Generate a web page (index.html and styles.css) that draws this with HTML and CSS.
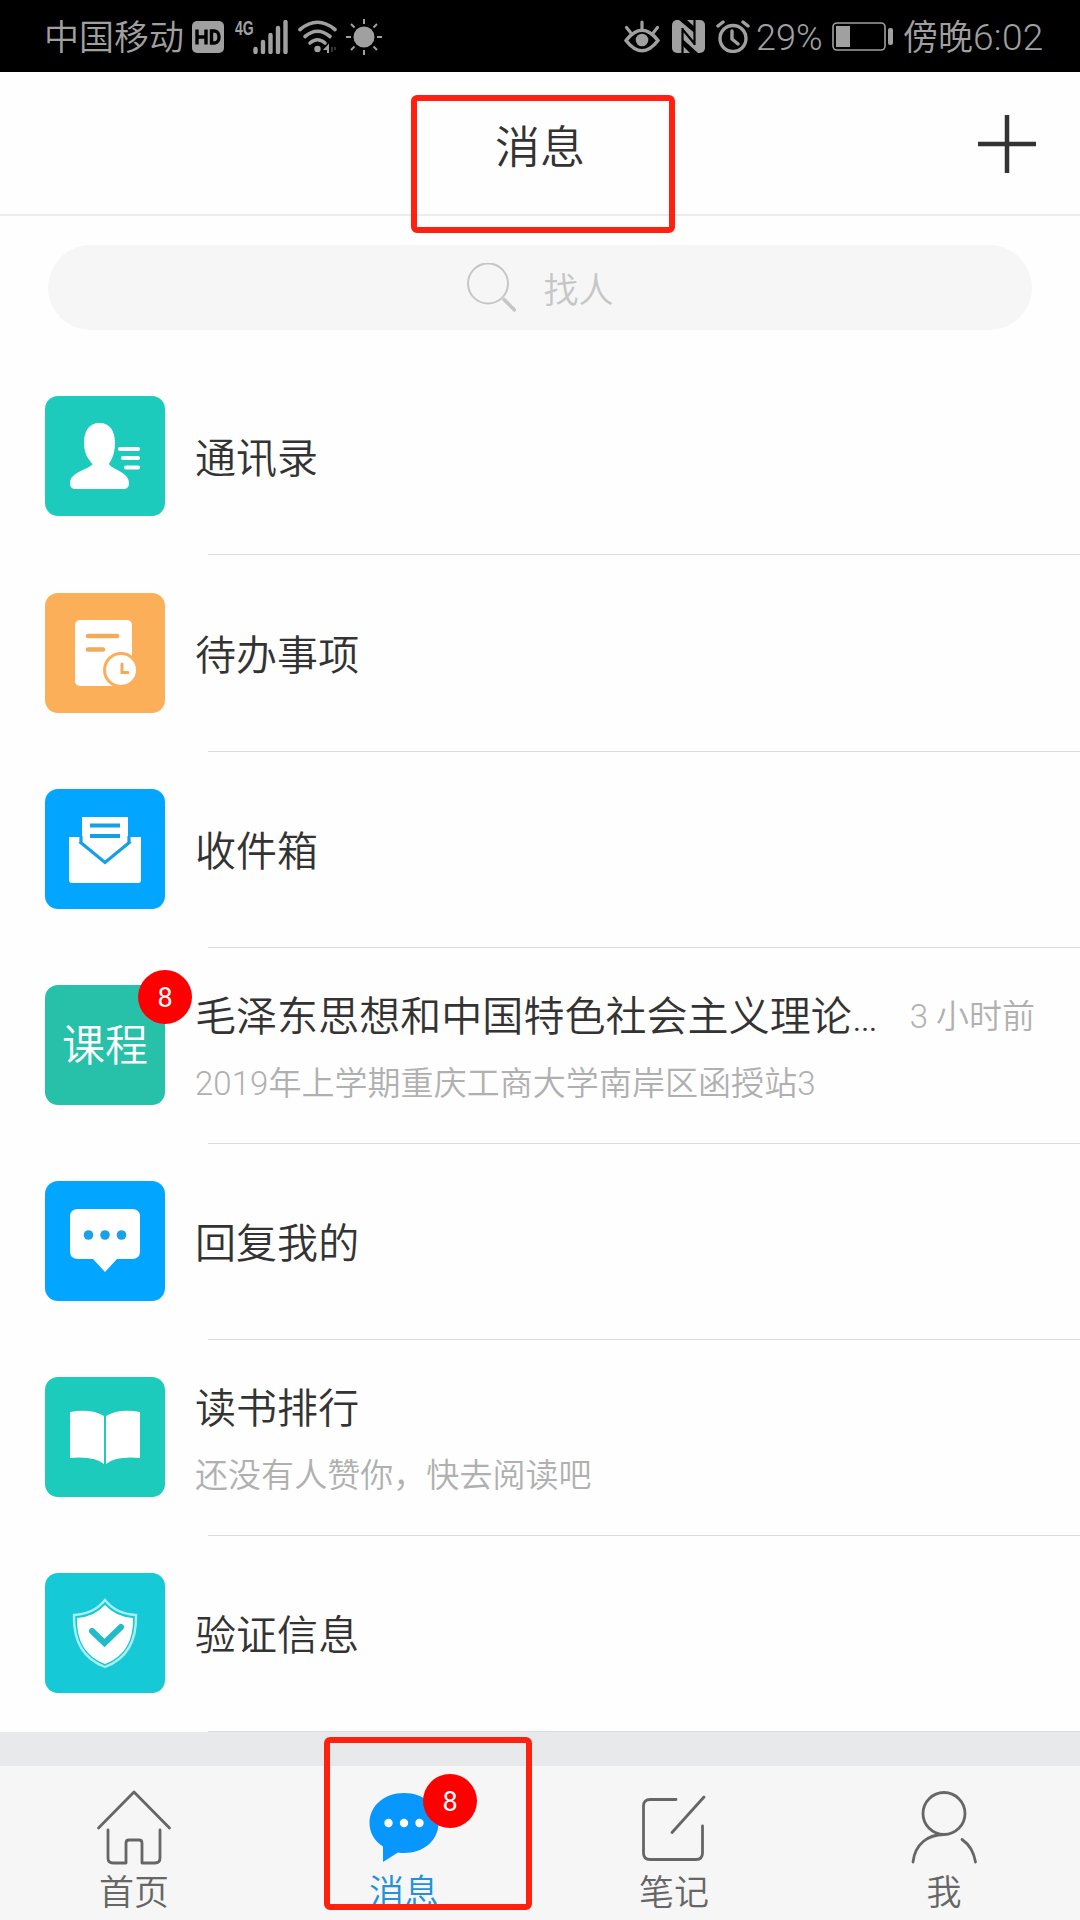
FILE: index.html
```html
<!DOCTYPE html>
<html lang="zh-CN">
<head>
<meta charset="utf-8">
<title>消息</title>
<link rel="stylesheet" href="styles.css">
</head>
<body>
<div class="phone">
  <div class="status">
    <div class="status-side">
      <span class="carrier">中国移动</span>
      <svg class="ic-hd" width="32" height="32" viewBox="0 0 32 32"><rect width="32" height="32" rx="5" fill="#a0a0a0"/><path d="M5 8.500v15M14 8.500v15M5 16h9M19.500 10v12h3c6 0 6-12 0-12z" fill="none" stroke="#000" stroke-width="3.400"/></svg>
      <span class="net">4G</span>
      <svg class="ic-signal" width="36" height="34" viewBox="0 0 36 34"><path d="M2.500 29v3M10 22v10M17.500 15v17M25 8v24M32.500 2v30" stroke="#a0a0a0" stroke-width="4.400" stroke-linecap="round"/></svg>
      <svg class="ic-wifi" width="40" height="34" viewBox="0 0 40 34"><g fill="none" stroke="#a0a0a0" stroke-width="3.600" stroke-linecap="round"><path d="M2 9.500Q19.500-5 37 9.500"/><path d="M7 16.500Q19.500 6 32 16.500"/><path d="M12 23Q19.500 16.500 27 23"/></g><circle cx="19.500" cy="29" r="3.200" fill="#a0a0a0"/><path d="M31 23.500V33h-2v-3h-4z" fill="#a0a0a0"/><path d="M34 27v5M37 27v3" stroke="#444" stroke-width="1.500"/></svg>
      <svg width="36" height="36" viewBox="0 0 36 36"><circle cx="18" cy="18" r="10.500" fill="#a0a0a0"/><path d="M18 0v5M18 31v5M0 18h5M31 18h5M5 5l3.500 3.500M27.500 27.500L31 31M5 31l3.500-3.500M27.500 8.500L31 5" stroke="#a0a0a0" stroke-width="2"/></svg>
    </div>
    <div class="status-side">
      <svg class="ic-eye" width="36" height="33" viewBox="0 0 36 33"><path d="M2 20.500Q18 0 34 20.500Q18 41 2 20.500z" fill="none" stroke="#a0a0a0" stroke-width="3.600" stroke-linejoin="round"/><circle cx="18" cy="20" r="6.300" fill="#a0a0a0"/><path d="M18 2v7M2.500 7.500l4 5M33.500 7.500l-4 5" stroke="#a0a0a0" stroke-width="3.200" stroke-linecap="round"/></svg>
      <svg class="ic-nfc" width="33" height="33" viewBox="0 0 33 33"><rect width="33" height="33" rx="5" fill="#a0a0a0"/><path d="M7 0L22.500 13V7L15 0zM26 33L10.500 19V25.500L18 33z" fill="#000"/><path d="M10.500 8v25M22.500 0v25M11 10L22 23" stroke="#000" stroke-width="2.200"/></svg>
      <svg class="ic-alarm" width="34" height="33" viewBox="0 0 34 33"><circle cx="17" cy="18.500" r="13" fill="none" stroke="#a0a0a0" stroke-width="3.400"/><path d="M16 11v8l6 5M2 6l5-4M32 6l-5-4" fill="none" stroke="#a0a0a0" stroke-width="3.400" stroke-linecap="round"/></svg>
      <span class="digits">29%</span>
      <svg class="ic-battery" width="62" height="29" viewBox="0 0 62 29"><rect x="1" y="1" width="52" height="27" rx="4" fill="none" stroke="#a0a0a0" stroke-width="1.600"/><rect x="4" y="4" width="14" height="21" fill="#a0a0a0"/><rect x="56" y="6" width="5" height="17" rx="2" fill="#a0a0a0"/></svg>
      <span class="clock">傍晚<span class="clock-digits">6:02</span></span>
    </div>
  </div>

  <header class="header">
    <h1 class="title">消息</h1>
    <svg class="plus" width="60" height="60" viewBox="0 0 60 60"><path d="M30 1v58M1 30h58" stroke="#333" stroke-width="4.500"/></svg>
    <div class="mark mark-title"></div>
  </header>

  <div class="search">
    <svg width="50" height="50" viewBox="0 0 50 50"><circle cx="22" cy="20.500" r="20" fill="none" stroke="#c6c6c6" stroke-width="2"/><path d="M37 35.500L49.500 48" stroke="#c6c6c6" stroke-width="3.500"/></svg>
    <span class="search-text">找人</span>
  </div>

  <main class="list">
    <section class="row">
      <div class="tile teal"><svg width="120" height="120" viewBox="0 0 120 120"><path d="M54.500 27C65 27 70 35 70 47C70 57 67 63 64 68C66 73 84 76 84 87C84 91 82 93 78 93H31C27 93 25 91 25 87C25 76 45 73 47.500 68C43 63 39 57 39 47C39 35 44 27 54.500 27z" fill="#fff"/><path d="M75 53h18M78 62h15M81 71.500h12" stroke="#fff" stroke-width="4.200" stroke-linecap="round"/></svg></div>
      <div class="body"><div class="name">通讯录</div></div>
    </section>
    <section class="row row-tall">
      <div class="tile orange"><svg width="120" height="120" viewBox="0 0 120 120"><rect x="30" y="27" width="57" height="66" rx="5" fill="#fff"/><path d="M43 43h29M43 56.500h15" stroke="#f2aa5c" stroke-width="4.600" stroke-linecap="round"/><circle cx="76" cy="77" r="16.500" fill="#fff" stroke="#fbaf59" stroke-width="3"/><path d="M77 71v8.500h6" fill="none" stroke="#f2aa5c" stroke-width="3" stroke-linecap="round"/></svg></div>
      <div class="body"><div class="name">待办事项</div></div>
    </section>
    <section class="row">
      <div class="tile blue"><svg width="120" height="120" viewBox="0 0 120 120"><path d="M24 48h72v43q0 3-3 3H27q-3 0-3-3z" fill="#fff"/><path d="M37 28h46v26L60 73L37 54z" fill="#fff"/><path d="M34.500 52.500L60 73.500L85.500 52.500M36 47v7M84 47v7" fill="none" stroke="#14a0e6" stroke-width="3.200"/><path d="M45 36.500h30M45 47h30" stroke="#14a0e6" stroke-width="4.200"/></svg></div>
      <div class="body"><div class="name">收件箱</div></div>
    </section>
    <section class="row">
      <div class="tile green"><span class="tile-text">课程</span><span class="badge">8</span></div>
      <div class="body">
        <div class="line"><div class="name">毛泽东思想和中国特色社会主义理论…</div><span class="time">3 小时前</span></div>
        <div class="sub">2019年上学期重庆工商大学南岸区函授站3</div>
      </div>
    </section>
    <section class="row">
      <div class="tile blue"><svg width="120" height="120" viewBox="0 0 120 120"><path d="M33 28h54q8 0 8 8v34q0 8-8 8H72L60 91L48 78H33q-8 0-8-8V36q0-8 8-8z" fill="#fff"/><g fill="#1ba0ea"><circle cx="43.500" cy="54" r="4.800"/><circle cx="60" cy="54" r="4.800"/><circle cx="76.500" cy="54" r="4.800"/></g></svg></div>
      <div class="body"><div class="name">回复我的</div></div>
    </section>
    <section class="row">
      <div class="tile teal"><svg width="120" height="120" viewBox="0 0 120 120"><path d="M25 35Q46 31 59 39V87Q49 79 25 81zM61 39Q74 31 95 35V81Q71 79 61 87z" fill="#fff"/></svg></div>
      <div class="body">
        <div class="line"><div class="name">读书排行</div></div>
        <div class="sub">还没有人赞你，快去阅读吧</div>
      </div>
    </section>
    <section class="row">
      <div class="tile cyan"><svg width="120" height="120" viewBox="0 0 120 120"><path d="M60 27Q71 41 91 42Q92 82 60 94Q28 82 29 42Q49 41 60 27z" fill="#15c9d6" stroke="#a9eef2" stroke-width="2.400"/><path d="M60 32Q71 44 88 45Q89 80 60 91Q31 80 32 45Q49 44 60 32z" fill="#fff"/><path d="M47 58L59.500 70L76 54" fill="none" stroke="#22bcc8" stroke-width="6" stroke-linecap="round"/></svg></div>
      <div class="body"><div class="name">验证信息</div></div>
    </section>
  </main>

  <div class="band"></div>

  <nav class="tabs">
    <div class="tab">
      <svg width="76" height="76" viewBox="0 0 76 76"><path d="M2.500 39L38 3L73.500 39M12 41v28q0 5 5 5h13V54q0-3 3-3h10q3 0 3 3v20h13q5 0 5-5V41" fill="none" stroke="#666" stroke-width="2.800" stroke-linecap="round" stroke-linejoin="round"/></svg>
      <span class="tab-name">首页</span>
    </div>
    <div class="tab active">
      <svg width="76" height="76" viewBox="0 0 76 76"><path d="M38 4C58 4 72.500 17 72.500 34S58 64 38 64Q35 64 32 63.500L17 73V57.500C8 52 3.500 43 3.500 34C3.500 17 18 4 38 4z" fill="#0896ff"/><g fill="#fff"><circle cx="22.500" cy="34" r="4.200"/><circle cx="38" cy="34" r="4.200"/><circle cx="53.500" cy="34" r="4.200"/></g></svg>
      <span class="badge">8</span>
      <span class="tab-name">消息</span>
      <div class="mark mark-tab"></div>
    </div>
    <div class="tab">
      <svg width="76" height="76" viewBox="0 0 76 76"><path d="M40 10.500H14q-6.500 0-6.500 6.500V64q0 6.500 6.500 6.500H60q6.500 0 6.500-6.500V37M36 43.500L68 8" fill="none" stroke="#666" stroke-width="2.800" stroke-linecap="round"/></svg>
      <span class="tab-name">笔记</span>
    </div>
    <div class="tab">
      <svg width="76" height="76" viewBox="0 0 76 76"><circle cx="38" cy="24.500" r="21" fill="none" stroke="#666" stroke-width="2.800"/><path d="M7 73C9 55 22 45.500 38 45.500M56 50.500Q67 58 69.500 73" fill="none" stroke="#666" stroke-width="2.800" stroke-linecap="round"/></svg>
      <span class="tab-name">我</span>
    </div>
  </nav>
</div>
</body>
</html>
```

FILE: styles.css
```css
* { box-sizing: border-box; }

body {
  margin: 0;
  background: #fefefe;
  font-family: Roboto, "Noto Sans CJK SC", sans-serif;
  font-weight: 350;
  color: #333;
}

svg { display: block; flex: none; }

.phone {
  width: 1080px;
  height: 1920px;
  display: flex;
  flex-direction: column;
  overflow: hidden;
}

/* Status bar */
.status {
  height: 72px;
  flex: none;
  display: flex;
  justify-content: space-between;
  padding: 0 36px 0 44px;
  background: #000;
  color: #a0a0a0;
}
.status-side { display: flex; align-items: center; height: 73px; }
.carrier { font-size: 35px; line-height: 60px; width: 148px; padding-top: 4px; white-space: nowrap; }
.ic-hd { margin-right: 11px; }
.net { width: 18px; height: 34px; font-size: 20px; line-height: 16px; font-weight: 700; font-family: "Liberation Sans", sans-serif; transform: scaleX(.7); transform-origin: left; }
.ic-signal { margin-right: 9px; }
.ic-wifi { margin-right: 8px; }
.ic-eye { margin-right: 12px; }
.ic-nfc { margin-right: 11px; }
.ic-alarm { margin-right: 6px; }
.digits { font-size: 36px; width: 76px; padding-top: 2px; }
.ic-battery { margin-right: 9px; }
.clock { font-size: 35px; line-height: 60px; width: 141px; padding-top: 4px; white-space: nowrap; }
.clock-digits { font-size: 37px; letter-spacing: .3px; }

/* Title bar */
.header {
  position: relative;
  height: 144px;
  flex: none;
  display: grid;
  grid-template-columns: 1fr 60px;
  align-items: center;
  padding: 2px 43px 0 103px;
  border-bottom: 2px solid #ececec;
}
.title { margin: 0; padding-top: 9px; text-align: center; font-size: 45px; line-height: 60px; font-weight: 350; }

.mark { position: absolute; border: 6px solid #ff2010; border-radius: 6px; z-index: 3; }
.mark-title { left: 411px; top: 23px; width: 264px; height: 138px; }

/* Search field */
.search {
  height: 85px;
  flex: none;
  margin: 29px 48px;
  border-radius: 43px;
  background: #f6f6f6;
  display: flex;
  align-items: center;
  justify-content: center;
  gap: 27px;
  color: #c6c6c6;
}
.search-text { padding-top: 8px; font-size: 35px; line-height: 50px; }

/* Message list */
.list { flex: none; }
.row {
  height: 196px;
  display: flex;
  align-items: flex-end;
  gap: 30px;
  padding: 0 45px 39px;
  background: linear-gradient(#d9dcde, #d9dcde) 208px 100% / 872px 1px no-repeat;
}
.row-tall { height: 197px; }
.tile {
  position: relative;
  width: 120px;
  height: 120px;
  flex: none;
  border-radius: 13px;
  display: flex;
  align-items: center;
  justify-content: center;
}
.teal { background: #1dcbbd; }
.orange { background: #fbaf59; }
.blue { background: #02a5ff; }
.green { background: #27c1aa; }
.cyan { background: #15c9d6; }
.tile-text { padding-top: 2px; color: #fff; font-size: 43px; line-height: 60px; }

.badge {
  position: absolute;
  width: 54px;
  height: 54px;
  border-radius: 50%;
  background: #fe0000;
  color: #fff;
  font-size: 27px;
  line-height: 56px;
  font-weight: 400;
  text-align: center;
}
.tile .badge { left: 93px; top: -15px; }

.body {
  flex: 1;
  height: 120px;
  display: flex;
  flex-direction: column;
  justify-content: center;
  padding-top: 5px;
}
.line { display: flex; align-items: center; justify-content: space-between; margin-top: 6px; }
.name { font-size: 41px; line-height: 60px; letter-spacing: .05px; white-space: nowrap; }
.time, .sub { font-size: 33px; line-height: 60px; color: #b0b0b0; white-space: nowrap; }
.sub { margin-top: 7px; letter-spacing: .05px; }

.band { height: 34px; flex: none; background: #e8e9ea; }

/* Bottom tabs */
.tabs {
  flex: 1;
  display: grid;
  grid-template-columns: repeat(4, 1fr);
  background: #f6f6f6;
}
.tab {
  position: relative;
  display: flex;
  flex-direction: column;
  align-items: center;
  padding: 23px 2px 0 0;
  color: #666;
}
.tab-name { padding-top: 4px; font-size: 35px; line-height: 50px; }
.active { color: #2391dc; }
.tab .badge { left: 153px; top: 8px; }
.mark-tab { left: 54px; top: -29px; width: 208px; height: 173px; }
```
